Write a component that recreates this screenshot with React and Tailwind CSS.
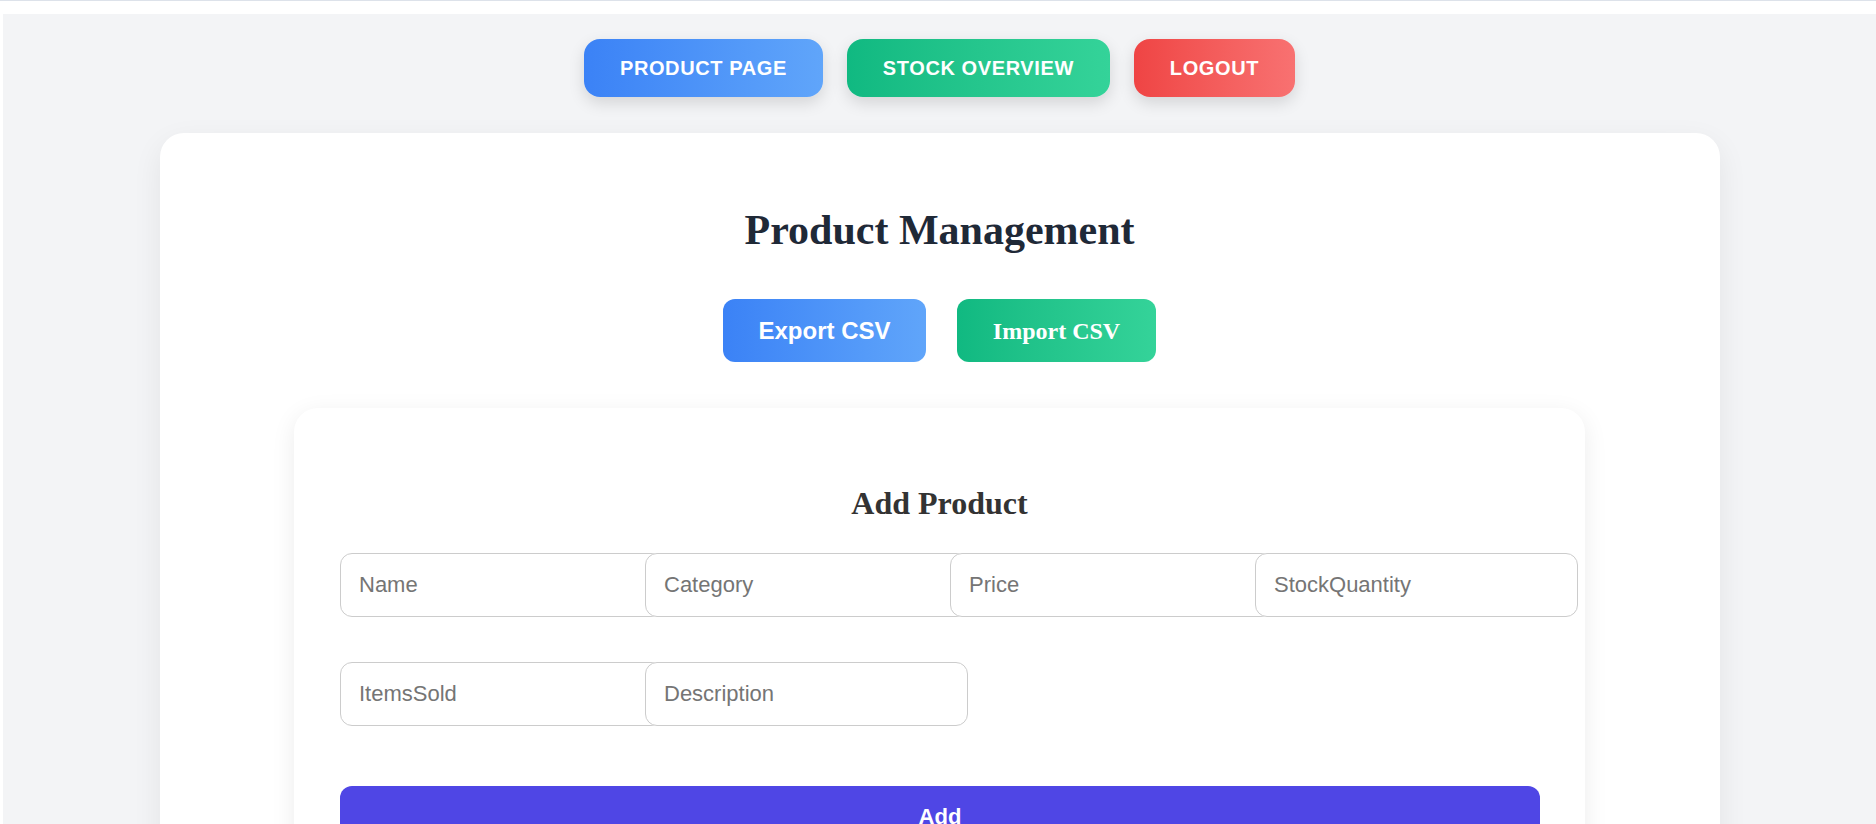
import React from "react";

const sans = { fontFamily: '"Liberation Sans", Arial, sans-serif' };
const serif = { fontFamily: '"Liberation Serif", "Times New Roman", serif' };

function NavButton({ label, cls }) {
  return (
    <button
      className={`h-[58px] px-9 rounded-2xl text-white font-bold text-[20px] uppercase tracking-[0.6px] shadow-[0_6px_16px_rgba(0,0,0,0.13)] ${cls}`}
      style={sans}
    >
      {label}
    </button>
  );
}

function Field({ placeholder }) {
  return (
    <div className="w-[285px] h-[64px]">
      <input
        placeholder={placeholder}
        className="w-[323px] h-[64px] px-[18px] bg-white border border-[#cccccc] rounded-[12px] text-[22px] text-[#333] placeholder:text-[#757575] outline-none"
        style={sans}
      />
    </div>
  );
}

export default function App() {
  return (
    <div className="min-h-screen bg-white" style={sans}>
      <div className="h-px bg-[#dde2ea]" />
      <div className="pt-[13px]">
        <div className="ml-[3px] bg-[#f3f4f6] pt-[25px] pb-10 min-h-[810px]">
          <nav className="flex justify-center gap-6">
            <NavButton label="Product Page" cls="bg-gradient-to-r from-[#3b82f6] to-[#60a5fa]" />
            <NavButton label="Stock Overview" cls="bg-gradient-to-r from-[#10b981] to-[#34d399]" />
            <NavButton label="Logout" cls="bg-gradient-to-r from-[#ef4444] to-[#f87171]" />
          </nav>

          <main className="mt-[36px] mx-auto w-[1560px] bg-white rounded-[24px] shadow-[0_10px_30px_rgba(0,0,0,0.07)] pt-[73px] pb-16">
            <h1
              className="text-center text-[42px] leading-[48px] font-bold text-[#1f2937]"
              style={serif}
            >
              Product Management
            </h1>

            <div className="mt-[45px] flex justify-center gap-[31px]">
              <button
                className="h-[63px] w-[203px] rounded-xl bg-gradient-to-r from-[#3b82f6] to-[#60a5fa] text-white font-bold text-[24px]"
                style={sans}
              >
                Export CSV
              </button>
              <button
                className="h-[63px] w-[199px] rounded-xl bg-gradient-to-r from-[#10b981] to-[#34d399] text-white font-bold text-[24px]"
                style={serif}
              >
                Import CSV
              </button>
            </div>

            <section className="mt-[46px] mx-auto w-[1291px] bg-white rounded-[24px] shadow-[0_6px_24px_rgba(0,0,0,0.08)] pt-[77px] pb-12">
              <h2
                className="text-center text-[32px] leading-[37px] font-bold text-[#333333]"
                style={serif}
              >
                Add Product
              </h2>

              <form className="ml-[46px] w-[1200px] mt-[31px]" onSubmit={(e) => e.preventDefault()}>
                <div className="grid grid-cols-4 gap-x-5 gap-y-[45px]">
                  <Field placeholder="Name" />
                  <Field placeholder="Category" />
                  <Field placeholder="Price" />
                  <Field placeholder="StockQuantity" />
                  <Field placeholder="ItemsSold" />
                  <Field placeholder="Description" />
                </div>
                <button
                  className="mt-[60px] w-[1200px] h-[60px] rounded-[12px] bg-[#4f46e5] text-white font-bold text-[22px]"
                  style={sans}
                >
                  Add
                </button>
              </form>
            </section>
          </main>
        </div>
      </div>
    </div>
  );
}
